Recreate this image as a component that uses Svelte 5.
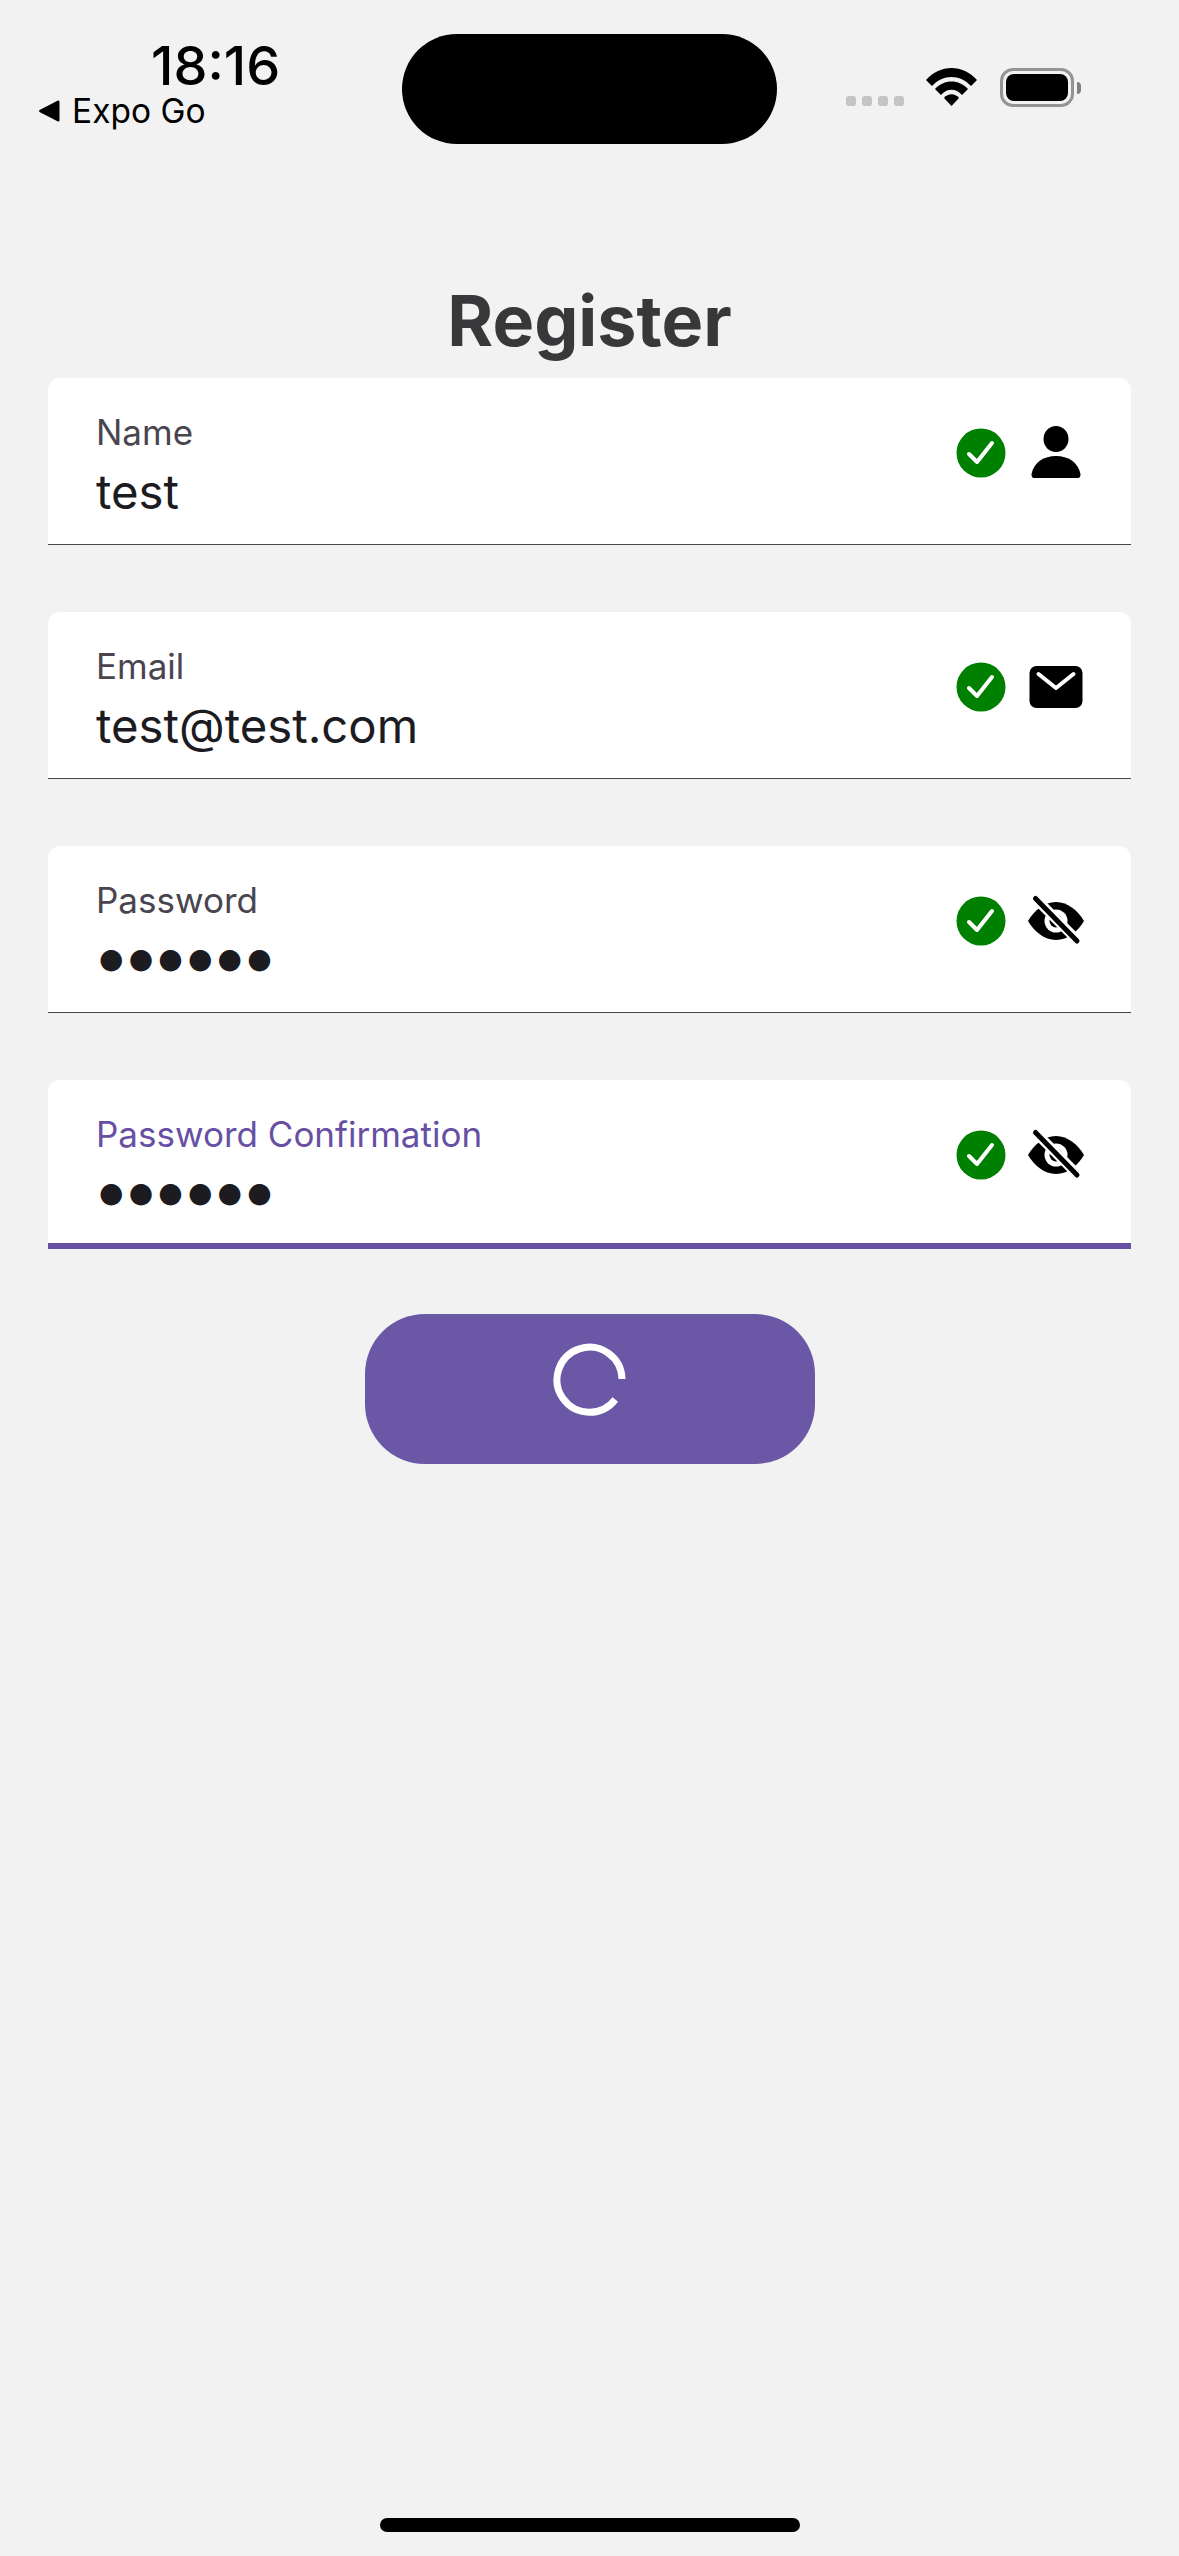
<script>
  const fields = [
    { label: 'Name', value: 'test', icon: 'person' },
    { label: 'Email', value: 'test@test.com', icon: 'mail' },
    { label: 'Password', value: '●●●●●●', icon: 'eye', secret: true },
    { label: 'Password Confirmation', value: '●●●●●●', icon: 'eye', secret: true, focused: true }
  ];
</script>

<div class="page">
  <div class="island"></div>
  <header class="status">
    <div class="left">
      <div class="time">18:16</div>
      <div class="back">
        <svg class="tri" width="22" height="24" viewBox="0 0 22 24"><path d="M20 1.5 L1.5 11 Q0.5 12 1.5 13 L20 22.5 Q21.500 23 21.500 21 V3 Q21.500 1 20 1.500Z" fill="#000"/></svg>
        <span>Expo Go</span>
      </div>
    </div>
    <div class="right">
      <div class="signal"><i></i><i></i><i></i><i></i></div>
      <svg width="51" height="38" viewBox="0 0 51 38">
        <path d="M0 12 C14 -4 37 -4 51 12 L45 18 C34 6 17 6 6 18Z" fill="#000"/>
        <path d="M9 21 C18 11 33 11 42 21 L36 27 C30 20 21 20 15 27Z" fill="#000"/>
        <path d="M18 30 C22 25 29 25 33 30 L25.500 38Z" fill="#000"/>
      </svg>
      <div class="battery"><div class="cell"></div></div>
      <div class="nub"></div>
    </div>
  </header>

  <h1>Register</h1>

  <main class="form">
    {#each fields as f}
      <section class="field" class:focused={f.focused}>
        <div class="texts">
          <div class="label">{f.label}</div>
          <div class="value" class:secret={f.secret}>{f.value}</div>
        </div>
        <div class="icons">
          <svg width="50" height="50" viewBox="0 0 50 50">
            <circle cx="25" cy="25" r="24.500" fill="#008000"/>
            <path d="M13 26 L21 34 L36 15" fill="none" stroke="#fff" stroke-width="4" stroke-linecap="round" stroke-linejoin="round"/>
          </svg>
          <div class="trail">
            {#if f.icon === 'person'}
              <svg width="56" height="56" viewBox="0 0 56 56">
                <ellipse cx="28" cy="14" rx="12.500" ry="13" fill="#000"/>
                <path d="M3.500 49 C6 37 16 31 28 31 C40 31 50 37 52.500 49 Q52.500 53 50 53 H6 Q3.500 53 3.500 49Z" fill="#000"/>
              </svg>
            {:else if f.icon === 'mail'}
              <svg width="56" height="56" viewBox="0 0 56 56">
                <rect x="1.500" y="7" width="53" height="42" rx="7" fill="#000"/>
                <path d="M10.500 15 L28 29 L45.500 15" fill="none" stroke="#fff" stroke-width="4" stroke-linecap="round" stroke-linejoin="round"/>
              </svg>
            {:else}
              <svg width="56" height="56" viewBox="0 0 56 56">
                <path d="M0 28 C6 18 16 9 28 9 C40 9 50 18 56 28 C50 38 40 47 28 47 C16 47 6 38 0 28Z" fill="#000"/>
                <circle cx="28" cy="28" r="11.500" fill="#fff"/>
                <circle cx="28" cy="28" r="6.500" fill="#000"/>
                <path d="M7 5 L49 47" stroke="#fff" stroke-width="10"/>
                <path d="M7.500 5.500 L49 48" stroke="#000" stroke-width="5" stroke-linecap="round"/>
              </svg>
            {/if}
          </div>
        </div>
      </section>
    {/each}
  </main>

  <button class="submit" type="button" aria-label="Loading">
    <svg width="74" height="74" viewBox="0 0 74 74">
      <path d="M69 37 A32.500 32.500 0 1 0 62.300 57.500" fill="none" stroke="#fff" stroke-width="7"/>
    </svg>
  </button>

  <div class="home"></div>
</div>

<style>
  :global(body) { margin: 0; background: #f2f2f2; }
  .page {
    width: 1179px;
    height: 2556px;
    position: relative;
    background: #f2f2f2;
    display: flex;
    flex-direction: column;
    align-items: center;
    font-family: Inter, "Liberation Sans", sans-serif;
    overflow: hidden;
  }
  .island {
    position: absolute;
    left: 402px;
    top: 34px;
    width: 375px;
    height: 110px;
    border-radius: 55px;
    background: #000;
  }
  .status {
    width: 100%;
    height: 267px;
    box-sizing: border-box;
    display: flex;
    justify-content: space-between;
    align-items: flex-start;
    padding: 0 98px 0 38px;
  }
  .left { display: flex; flex-direction: column; }
  .time {
    font-size: 54px;
    font-weight: 500;
    line-height: 60px;
    margin: 36px 0 0 113px;
    color: #000;
  }
  .back {
    display: flex;
    align-items: center;
    gap: 12px;
    margin-top: -7px;
    font-size: 33.500px;
    line-height: 44px;
    color: #000;
  }
  .right { display: flex; align-items: flex-start; padding-top: 68px; }
  .signal { display: flex; gap: 6px; margin: 28px 22px 0 0; }
  .signal i { width: 10px; height: 10px; border-radius: 3px; background: #c4c4c4; }
  .battery {
    width: 74px;
    height: 39px;
    box-sizing: border-box;
    border: 3px solid #949494;
    border-radius: 13px;
    padding: 3px;
    margin-left: 23px;
  }
  .cell { width: 100%; height: 100%; background: #000; border-radius: 8px; }
  .nub {
    width: 4px;
    height: 12px;
    margin: 14px 0 0 3px;
    background: #808080;
    border-radius: 0 6px 6px 0;
  }
  h1 {
    margin: 0;
    height: 111px;
    font-size: 70px;
    line-height: 108px;
    font-weight: 700;
    color: #38383a;
  }
  .form {
    width: 1083px;
    display: flex;
    flex-direction: column;
    gap: 67px;
  }
  .field {
    height: 167px;
    box-sizing: border-box;
    background: #fff;
    border-radius: 12px 12px 0 0;
    border-bottom: 1px solid #49454f;
    display: flex;
    justify-content: space-between;
    padding: 0 47px 0 48px;
  }
  .field.focused { height: 169px; border-bottom: 6px solid #6750a4; }
  .label {
    margin-top: 31px;
    font-size: 35px;
    line-height: 46px;
    color: #49454f;
  }
  .focused .label { color: #6750a4; }
  .value {
    margin-top: 8px;
    font-size: 47.300px;
    line-height: 58px;
    color: #1c1b1f;
  }
  .secret {
    font-family: "DejaVu Sans", sans-serif;
    font-size: 28px;
    letter-spacing: 5.200px;
    margin-left: 3px;
    margin-top: 7px;
  }
  .icons { display: flex; align-items: center; gap: 22px; height: 56px; margin-top: 47px; }
  .trail { width: 56px; height: 56px; }
  .trail svg, .icons svg { display: block; }
  .submit {
    width: 450px;
    height: 150px;
    margin-top: 65px;
    border: 0;
    padding: 0 0 20px 0;
    border-radius: 60px;
    background: #6a57a5;
    display: flex;
    align-items: center;
    justify-content: center;
  }
  .home {
    width: 420px;
    height: 14px;
    border-radius: 7px;
    background: #000;
    margin-top: auto;
    margin-bottom: 24px;
  }
</style>
